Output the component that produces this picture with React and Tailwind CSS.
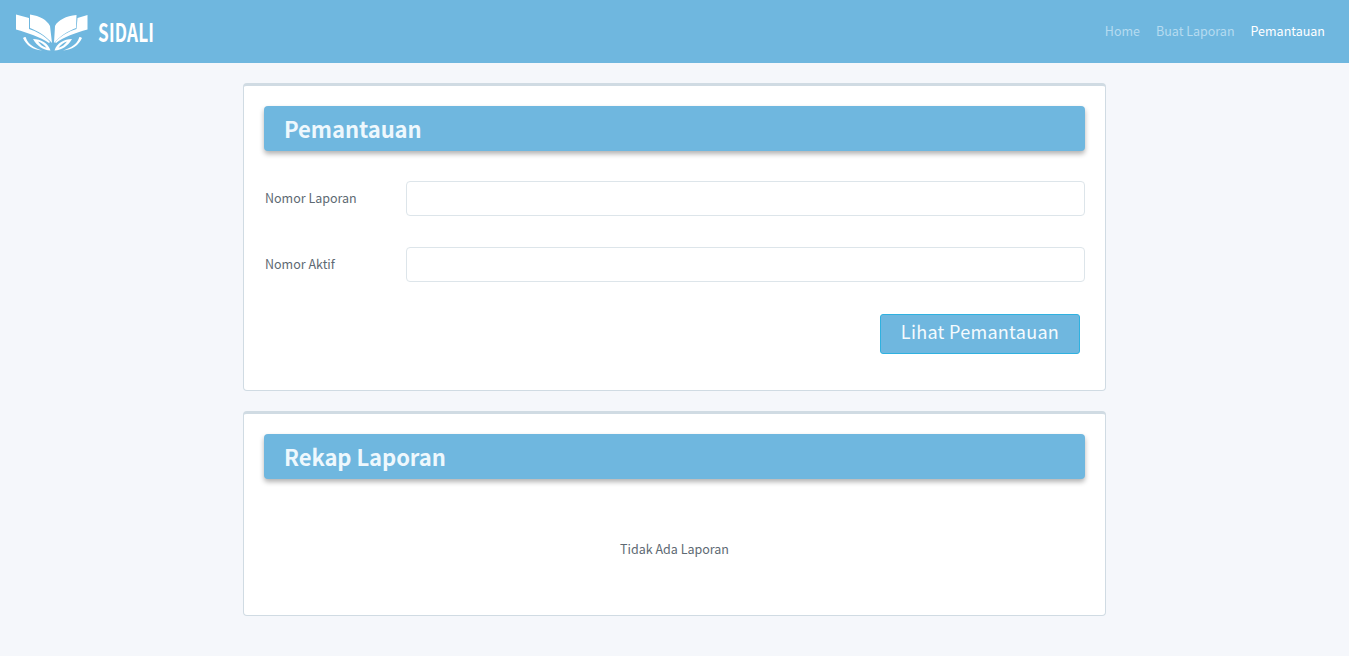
const FONT = '"Noto Sans CJK SC", "Source Sans Pro", "Noto Sans", sans-serif'

function Logo() {
  return (
    <div className="flex items-center">
      <svg width="75" height="42" viewBox="15 10 75 42" className="block">
        <g fill="#fff">
          <path d="M16 13.5 L29 17 L29 28 C36 30 45 35 50 41 L49 42 C40 36 28 32 16 28.5 Z" />
          <path d="M30 13.5 C40 15 47 19 50 25 L52 42 C46 35 38 30 30 27 Z" />
          <path d="M87.5 14 L87.5 28.5 C75 32 64 36 56 42 L55 41 C61 35 69 30 76.5 28 L77.5 17 Z" />
          <path d="M76.5 14 L76 27 C68 30 60 35 54 42 L55 25 C58 19 66 15 76.5 14 Z" />
          <path d="M23 37 C25 35.5 26 36 26 37 C28 43 34 47 42 49.5 C33 49 26 44 23 37 Z" />
          <path d="M33 38 C41 38 48 42 50.5 49.5 C43 49 37 45 33 38 Z M38 40.5 C40 43.5 43 45.8 46.5 46.8 C44.5 43.8 41.5 41.5 38 40.5 Z" fillRule="evenodd" />
          <path d="M82 37 C80 35.5 79 36 79 37 C77 43 71 47 63 49.5 C72 49 79 44 82 37 Z" />
          <path d="M72 38 C64 38 57 42 54.5 49.5 C62 49 68 45 72 38 Z M67 40.5 C65 43.5 62 45.8 58.5 46.8 C60.5 43.8 63.5 41.5 67 40.5 Z" fillRule="evenodd" />
        </g>
      </svg>
      <span className="ml-[8px] w-[56px] font-bold text-[26px] leading-none text-white tracking-[0.3px] origin-left scale-x-[0.66] whitespace-nowrap -mt-[2px]">
        SIDALI
      </span>
    </div>
  )
}

function Header() {
  return (
    <header className="h-[63px] bg-[#6fb7df] flex items-center justify-between pl-[15px] pr-[24px]">
      <Logo />
      <nav className="flex items-center gap-[16px] text-[12.5px] leading-5 -mt-px">
        <a className="text-[#b5dbf0]">Home</a>
        <a className="text-[#b5dbf0]">Buat Laporan</a>
        <a className="text-white">Pemantauan</a>
      </nav>
    </header>
  )
}

function Card({ title, children }) {
  return (
    <section className="bg-white border border-[#d0dbe3] border-t-[3px] rounded-[4px] px-[20px] pt-[20px]">
      <div className="h-[45px] rounded-[4px] bg-[#6fb7df] shadow-[0_3px_5px_rgba(0,0,0,0.3)] flex items-center px-[20px]">
        <h2 className="text-[22px] leading-8 font-semibold text-[#eef8fd] -mt-[2px] -tracking-[0.05px]">{title}</h2>
      </div>
      {children}
    </section>
  )
}

function Field({ label }) {
  return (
    <div className="flex items-center h-[35px]">
      <label className="w-[142px] pl-px text-[12.5px] leading-5 text-[#5e6a73] -mt-[2px]">{label}</label>
      <input className="flex-1 h-[35px] bg-white border border-[#dde5ea] rounded-[4px] outline-none" />
    </div>
  )
}

export default function App() {
  return (
    <div className="min-h-[656px] bg-[#f5f7fb]" style={{ fontFamily: FONT }}>
      <Header />
      <main className="w-[863px] ml-[243px] pt-[20px] flex flex-col gap-[20px]">
        <Card title="Pemantauan">
          <div className="pt-[30px] flex flex-col gap-[31px]">
            <Field label="Nomor Laporan" />
            <Field label="Nomor Aktif" />
          </div>
          <div className="flex justify-end pt-[32px] pr-[5px] pb-[36px]">
            <button className="w-[200px] h-[40px] bg-[#6fb7df] border border-[#2fb1e0] rounded-[3px] text-[18px] leading-7 tracking-[0.3px] text-[#f5fbfe] pb-[6px]">
              Lihat Pemantauan
            </button>
          </div>
        </Card>
        <Card title="Rekap Laporan">
          <p className="pt-[60px] pb-[56px] text-center text-[12.5px] leading-5 text-[#5e6a73]">Tidak Ada Laporan</p>
        </Card>
      </main>
    </div>
  )
}
